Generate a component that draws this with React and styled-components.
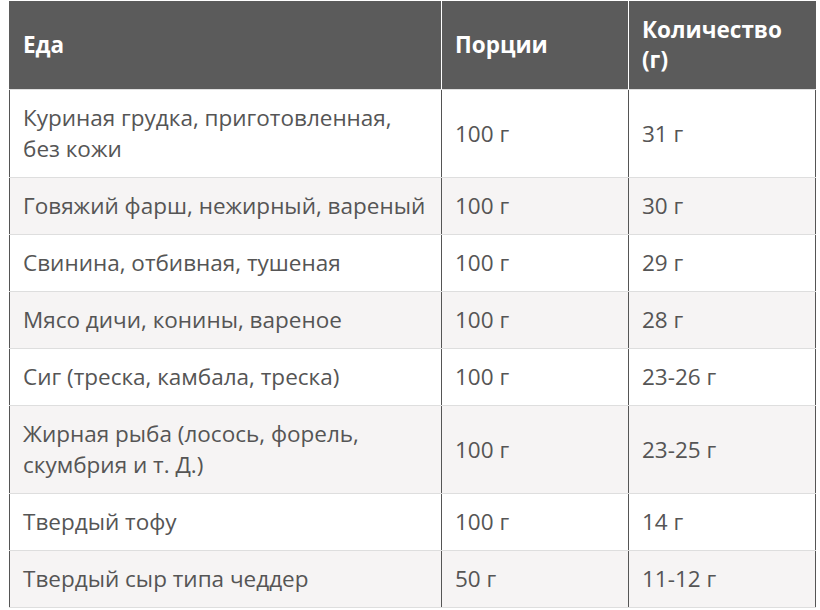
import React from "react";
import styled, { createGlobalStyle } from "styled-components";

const Global = createGlobalStyle`
  html, body { margin: 0; padding: 0; background: #fff; }
  body { font-family: "Open Sans", "Noto Sans", sans-serif; }
`;

const Wrap = styled.div`
  padding: 1px 5px 0 9px;
`;

const Table = styled.table`
  width: 806px;
  border-collapse: collapse;
  table-layout: fixed;
  font-size: 22.5px;
  line-height: 30px;
  color: #555;
`;

const HeadCell = styled.th`
  background: #5b5b5b;
  color: #fff;
  font-weight: 700;
  text-align: left;
  padding: 13px 13px;
  border-left: 1px solid #fff;
  border-bottom: 1px solid #e0e0e0;
  height: 88px;
  box-sizing: border-box;
  vertical-align: middle;
  &:first-child { border-left: 1px solid #5b5b5b; }
`;

const Row = styled.tr`
  background: ${(p) => (p.$alt ? "#f6f4f4" : "#fff")};
`;

const Cell = styled.td`
  padding: 12.5px 13px;
  line-height: 31px;
  border-left: 1px solid #555;
  border-right: 1px solid #555;
  border-bottom: 1px solid #dedede;
  vertical-align: middle;
`;

const rows = [
  ["Куриная грудка, приготовленная, без кожи", "100 г", "31 г"],
  ["Говяжий фарш, нежирный, вареный", "100 г", "30 г"],
  ["Свинина, отбивная, тушеная", "100 г", "29 г"],
  ["Мясо дичи, конины, вареное", "100 г", "28 г"],
  ["Сиг (треска, камбала, треска)", "100 г", "23-26 г"],
  ["Жирная рыба (лосось, форель, скумбрия и т. Д.)", "100 г", "23-25 г"],
  ["Твердый тофу", "100 г", "14 г"],
  ["Твердый сыр типа чеддер", "50 г", "11-12 г"],
];

export default function App() {
  return (
    <>
      <Global />
      <Wrap>
        <Table>
          <colgroup>
            <col style={{ width: 432 }} />
            <col style={{ width: 187 }} />
            <col style={{ width: 187 }} />
          </colgroup>
          <thead>
            <tr>
              <HeadCell>Еда</HeadCell>
              <HeadCell>Порции</HeadCell>
              <HeadCell>Количество (г)</HeadCell>
            </tr>
          </thead>
          <tbody>
            {rows.map((r, i) => (
              <Row key={i} $alt={i % 2 === 1}>
                <Cell>{r[0]}</Cell>
                <Cell>{r[1]}</Cell>
                <Cell>{r[2]}</Cell>
              </Row>
            ))}
          </tbody>
        </Table>
      </Wrap>
    </>
  );
}
